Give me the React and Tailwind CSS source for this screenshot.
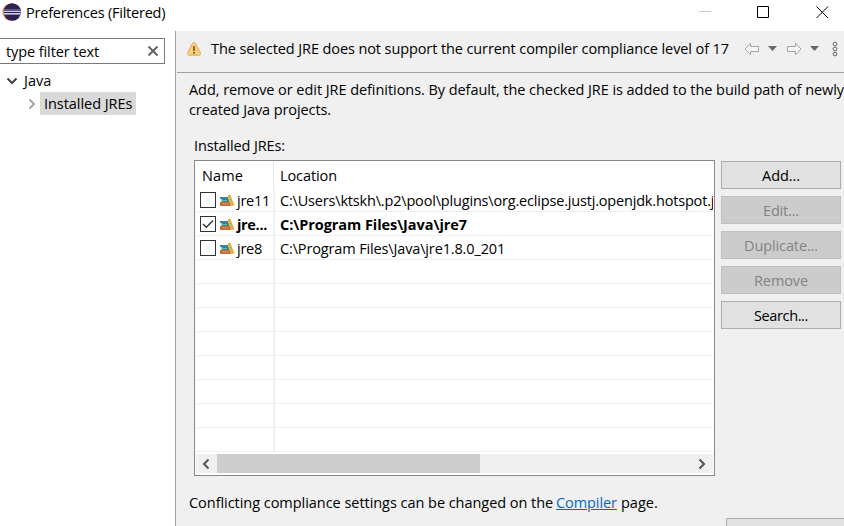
function EclipseLogo() {
  return (
    <svg className="ml-[2px] h-5 w-[19px]" viewBox="0 0 19 20">
      <circle cx="9" cy="10" r="8.8" fill="#f0a353" />
      <circle cx="10.3" cy="10" r="8.7" fill="#2c2255" />
      <path d="M1.500 8h17M1.500 12.500h17" stroke="#8f8ab4" strokeWidth="1" />
      <path d="M1.500 9.500h17.500M1.500 11.500h17.500" stroke="#cfcde0" strokeWidth="1.200" />
    </svg>
  )
}

function WarningIcon() {
  return (
    <svg className="h-4 w-4" viewBox="0 0 16 16">
      <path d="M8 1.5c.8 0 1.3.5 1.7 1.2l4.6 9c.6 1.300-.1 2.500-1.400 2.500H3.100c-1.300 0-2-1.200-1.400-2.500l4.600-9C6.700 2 7.200 1.500 8 1.500Z" fill="#fbd078" stroke="#dba85c" />
      <path d="M8 5v5M8 11v1.800" stroke="#7a5218" strokeWidth="1.600" />
    </svg>
  )
}

function BooksIcon() {
  return (
    <svg className="h-4 w-4 shrink-0" viewBox="0 0 16 16">
      <path d="M1 4h8v2H1z" fill="#3a7fa6" />
      <path d="M2.500 6h7.500v3H2.500z" fill="#2f8f7c" />
      <path d="M1 9h10v4H1z" fill="#c06c3c" />
      <path d="M3 7.500h5" stroke="#7cc3a4" strokeWidth=".8" />
      <path d="M3 11h6" stroke="#e09a62" strokeWidth=".8" />
      <path d="m8.500 2.500 2.700-1 4.300 11.200h-3z" fill="#e8a640" />
      <path d="m10.300 7.500 2 5.200h-2z" fill="#c98328" />
    </svg>
  )
}

function NavArrow({ className = '' }) {
  return (
    <svg className={`h-[14px] w-4 ${className}`} viewBox="0 0 16 14" fill="#f6f6f6" stroke="#a4a4a4" strokeLinejoin="round">
      <path d="M1 7 6.500 1.300v3.200h8v5h-8v3.200Z" />
    </svg>
  )
}

function Caret() {
  return (
    <svg className="h-[5px] w-[9px]" viewBox="0 0 9 5">
      <path d="M0 0h9L4.500 5Z" fill="#686868" />
    </svg>
  )
}

function Chevron({ className }) {
  return (
    <svg className={className} viewBox="0 0 12 12" fill="none" stroke="currentColor" strokeWidth="2">
      <path d="m3.500 1.500 4.500 4.500-4.500 4.500" />
    </svg>
  )
}

function Check({ checked }) {
  return (
    <span className="flex h-4 w-4 shrink-0 border border-[#333] bg-white">
      {checked && (
        <svg className="h-[14px] w-[14px]" viewBox="0 0 14 14" fill="none" stroke="#333" strokeWidth="1.400">
          <path d="m2 7 3.300 3.300L12 3.500" />
        </svg>
      )}
    </span>
  )
}

const rows = [
  { name: 'jre11', nameClass: 'tracking-[-0.26px]', path: 'C:\\Users\\ktskh\\.p2\\pool\\plugins\\org.eclipse.justj.openjdk.hotspot.j', pathClass: 'tracking-[-0.18px]' },
  { name: 'jre...', nameClass: 'font-bold tracking-[-0.33px]', path: 'C:\\Program Files\\Java\\jre7', pathClass: 'font-bold tracking-[-0.06px]', checked: true },
  { name: 'jre8', nameClass: 'tracking-[-0.26px]', path: 'C:\\Program Files\\Java\\jre1.8.0_201', pathClass: 'tracking-[-0.14px]' },
  {}, {}, {}, {}, {}, {}, {}, {},
]

const actions = [
  { label: 'Add...', tracking: 'tracking-[-0.07px]' },
  { label: 'Edit...', tracking: 'tracking-[-0.2px]', disabled: true },
  { label: 'Duplicate...', tracking: 'tracking-[-0.11px]', disabled: true },
  { label: 'Remove', tracking: 'tracking-[-0.1px]', disabled: true },
  { label: 'Search...', tracking: 'tracking-[-0.37px]' },
]

function JreTable() {
  return (
    <div className="h-[316px] w-[521px] shrink-0 border border-[#828790] bg-white">
      <div className="flex h-[27px] items-center pt-px">
        <span className="flex h-full w-[79px] items-center border-r border-[#e5e5e5] pl-[7px] pt-[2px] tracking-[0.1px]">Name</span>
        <span className="pl-[6px] pt-[2px] tracking-[-0.09px]">Location</span>
      </div>
      <div className="pl-px pr-px">
        {rows.map((row, i) => (
          <div key={i} className="flex h-6 items-center border-b border-[#efefef]">
            <div className="flex h-6 w-[79px] shrink-0 items-center border-r-2 border-[#edf1f5] pl-[4px]">
              {row.name && (
                <>
                  <Check checked={row.checked} />
                  <span className="ml-[3px] mt-[2px] flex"><BooksIcon /></span>
                  <span className={`ml-[2px] mt-[2px] whitespace-nowrap ${row.nameClass}`}>{row.name}</span>
                </>
              )}
            </div>
            {row.path && <span className={`mt-[2px] overflow-hidden whitespace-nowrap pl-[5px] ${row.pathClass}`}>{row.path}</span>}
          </div>
        ))}
      </div>
      <div className="mx-px mt-[2px] flex h-[19px] items-center bg-[#f0f0f0] text-[#555]">
        <Chevron className="ml-[4px] h-3 w-3 rotate-180" />
        <div className="ml-[5px] h-full w-[263px] bg-[#cdcdcd]" />
        <Chevron className="ml-auto mr-[5px] h-3 w-3" />
      </div>
    </div>
  )
}

export default function App() {
  return (
    <div className="flex h-[526px] w-[844px] flex-col overflow-hidden bg-white font-['Open_Sans',sans-serif] text-[14.5px] leading-5 text-black">
      <header className="flex h-[31px] shrink-0 items-start">
        <div className="flex h-6 items-center">
          <EclipseLogo />
          <h1 className="ml-[5px] mt-[2px] whitespace-nowrap tracking-[-0.22px]">Preferences (Filtered)</h1>
        </div>
        <svg className="ml-auto h-6 w-[150px]" viewBox="0 0 150 24" fill="none" stroke="#000">
          <path d="M5 11.500h12" stroke="#c8c8c8" />
          <path d="M63.500 6.500h11v11h-11z" />
          <path d="m122.500 6.500 11.500 11.500M134 6.500 122.500 18" />
        </svg>
      </header>
      <div className="flex min-h-0 flex-1">
        <aside className="w-[175px] shrink-0 pt-[7px]">
          <div className="flex h-[26px] w-[165px] items-center border border-l-0 border-[#7a7a7a] pl-[6px]">
            <span className="mt-px tracking-[-0.09px]">type filter text</span>
            <svg className="ml-auto mr-[6px] h-[10px] w-[10px]" viewBox="0 0 10 10" stroke="#666" strokeWidth="2"><path d="m.5.5 9 9M9.500.5l-9 9" /></svg>
          </div>
          <div className="mt-[5px] flex h-6 items-center pl-[6px]">
            <Chevron className="h-3 w-3 rotate-90 text-[#404040]" />
            <span className="ml-[6px]">Java</span>
          </div>
          <div className="-mt-px flex h-[23px] items-center pl-[26px]">
            <Chevron className="h-3 w-3 text-[#a6a6a6]" />
            <span className="ml-[2px] flex h-[23px] w-24 items-center bg-[#d9d9d9] pl-[4px] tracking-[-0.05px]">Installed JREs</span>
          </div>
        </aside>
        <main className="flex min-w-0 flex-1 flex-col border-l border-[#a0a0a0] bg-[#f0f0f0]">
          <div className="ml-px flex h-[42px] shrink-0 items-center border-b border-[#a0a0a0] pb-[6px] pl-[9px]">
            <WarningIcon />
            <span className="ml-[9px] whitespace-nowrap tracking-[-0.1px]">The selected JRE does not support the current compiler compliance level of 17</span>
            <div className="ml-auto flex items-center">
              <NavArrow />
              <span className="ml-[8px]"><Caret /></span>
              <NavArrow className="ml-[9px] rotate-180" />
              <span className="ml-[8px]"><Caret /></span>
              <svg className="ml-[13px] mr-[6px] h-4 w-[6px]" viewBox="0 0 6 16" fill="none" stroke="#666"><circle cx="3" cy="3" r="1.900" /><circle cx="3" cy="8" r="1.900" /><circle cx="3" cy="13" r="1.900" /></svg>
            </div>
          </div>
          <div className="ml-[13px] mt-[7px] h-10 whitespace-nowrap">
            <p className="tracking-[-0.056px]">Add, remove or edit JRE definitions. By default, the checked JRE is added to the build path of newly</p>
            <p className="tracking-[-0.1px]">created Java projects.</p>
          </div>
          <p className="ml-[18px] mt-[16px] tracking-[-0.12px]">Installed JREs:</p>
          <div className="ml-[18px] mt-[4px] flex">
            <JreTable />
            <div className="ml-[6px] mt-px flex flex-col gap-[7px]">
              {actions.map((a) => (
                <button key={a.label} disabled={a.disabled} className={`h-7 w-[120px] border pt-[2px] ${a.tracking} ${a.disabled ? 'border-[#bfbfbf] bg-[#cccccc] text-[#838383]' : 'border-[#adadad] bg-[#e1e1e1] text-black'}`}>
                  {a.label}
                </button>
              ))}
            </div>
          </div>
          <p className="ml-[13px] mt-[17px] flex whitespace-nowrap">
            <span className="w-[367px] tracking-[-0.04px]">Conflicting compliance settings can be changed on the</span>
            <a className="w-[65px] tracking-[-0.07px] text-[#0066cc] underline">Compiler</a>
            <span>page.</span>
          </p>
          <div className="ml-[550px] mt-[5px] h-[28px] w-[130px] shrink-0 border border-[#adadad] bg-[#e1e1e1]" />
        </main>
      </div>
    </div>
  )
}
